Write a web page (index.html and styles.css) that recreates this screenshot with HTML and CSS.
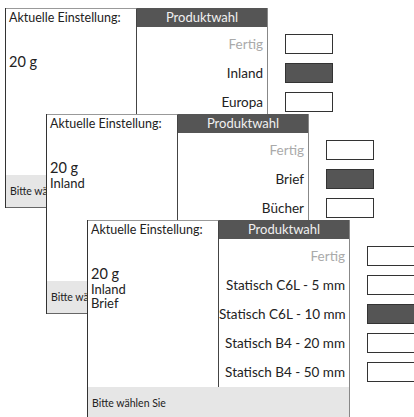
FILE: index.html
```html
<!DOCTYPE html>
<html>
<head>
  <meta charset="UTF-8">
  <title>Produktwahl</title>
  <link rel="stylesheet" href="styles.css">
</head>
<body>
  <div class="desk">

    <div class="screen s1">
      <div class="panel">
        <div class="main">
          <div class="current">
            <div class="label">Aktuelle Einstellung:</div>
            <div class="values">
              <div class="weight">20 g</div>
            </div>
          </div>
          <div class="choices">
            <div class="head">Produktwahl</div>
            <div class="opts">
              <div class="opt muted">Fertig</div>
              <div class="opt">Inland</div>
              <div class="opt">Europa</div>
            </div>
          </div>
        </div>
        <div class="footer">Bitte wählen Sie</div>
      </div>
      <div class="keys">
        <div class="key"></div>
        <div class="key on"></div>
        <div class="key"></div>
      </div>
    </div>

    <div class="screen s2">
      <div class="panel">
        <div class="main">
          <div class="current">
            <div class="label">Aktuelle Einstellung:</div>
            <div class="values">
              <div class="weight">20 g</div>
              <div class="lines">Inland</div>
            </div>
          </div>
          <div class="choices">
            <div class="head">Produktwahl</div>
            <div class="opts">
              <div class="opt muted">Fertig</div>
              <div class="opt">Brief</div>
              <div class="opt">Bücher</div>
            </div>
          </div>
        </div>
        <div class="footer">Bitte wählen Sie</div>
      </div>
      <div class="keys">
        <div class="key"></div>
        <div class="key on"></div>
        <div class="key"></div>
      </div>
    </div>

    <div class="screen s3">
      <div class="panel">
        <div class="main">
          <div class="current">
            <div class="label">Aktuelle Einstellung:</div>
            <div class="values">
              <div class="weight">20 g</div>
              <div class="lines">Inland<br>Brief</div>
            </div>
          </div>
          <div class="choices">
            <div class="head">Produktwahl</div>
            <div class="opts">
              <div class="opt muted">Fertig</div>
              <div class="opt">Statisch C6L - 5 mm</div>
              <div class="opt">Statisch C6L - 10 mm</div>
              <div class="opt">Statisch B4 - 20 mm</div>
              <div class="opt">Statisch B4 - 50 mm</div>
            </div>
          </div>
        </div>
        <div class="footer">Bitte wählen Sie</div>
      </div>
      <div class="keys">
        <div class="key"></div>
        <div class="key"></div>
        <div class="key on"></div>
        <div class="key"></div>
        <div class="key"></div>
      </div>
    </div>

  </div>
</body>
</html>
```

FILE: styles.css
```css
* { box-sizing: border-box; }
body { margin: 0; background: #fff; font-family: Lato, "Liberation Sans", sans-serif; color: #222; overflow: hidden; }
.desk { position: relative; width: 414px; height: 417px; overflow: hidden; }

/* the three screens are stacked like windows */
.screen { position: absolute; display: flex; align-items: flex-start; }
.s1 { left: 5px; top: 8px; z-index: 1; }
.s2 { left: 46px; top: 114px; z-index: 2; }
.s3 { left: 87px; top: 220px; z-index: 3; }

.panel { width: 263px; height: 200px; background: #fff; border-left: 1px solid #333; display: flex; flex-direction: column; }
.main { height: 167px; display: grid; grid-template-columns: 131px 131px; }
.current { border-top: 1px solid #999; border-right: 1px solid #444; padding-left: 3px; font-size: 13px; }
.label { height: 18px; line-height: 18px; font-size: 12.5px; }
.values { margin-top: 27px; line-height: 14px; }
.weight { font-size: 14.5px; line-height: 16px; }

.choices { border-right: 1px solid #888; display: flex; flex-direction: column; }
.head { height: 19px; line-height: 19px; background: #555; color: #f0f0f0; text-align: center; font-size: 13px; }
.opts { padding-top: 3px; }
.opt { height: 29px; line-height: 29px; text-align: right; padding-right: 4px; font-size: 13.5px; white-space: nowrap; }
.opt.muted { color: #aaa; }

.footer { height: 33px; background: #e6e6e6; border-right: 1px solid #888; border-bottom: 1px solid #666; padding-left: 4px; font-size: 10.5px; line-height: 32px; white-space: nowrap; overflow: hidden; }

.keys { margin-left: 17px; padding-top: 26px; display: flex; flex-direction: column; gap: 9px; }
.key { width: 48px; height: 20px; border: 1px solid #333; background: #fff; }
.key.on { background: #555; }
```
